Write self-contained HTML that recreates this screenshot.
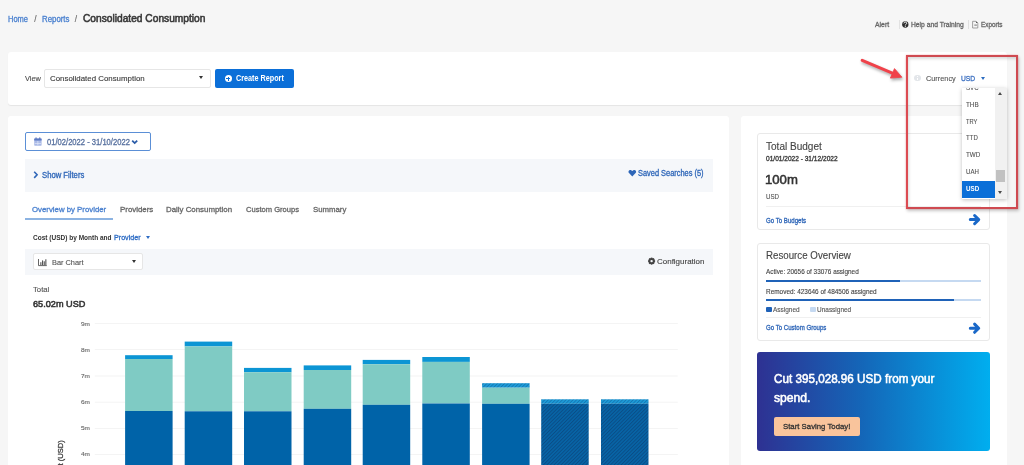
<!DOCTYPE html>
<html><head><meta charset="utf-8"><style>
*{margin:0;padding:0;box-sizing:border-box}
html,body{width:1024px;height:465px;overflow:hidden;background:#f6f6f6}
#root{position:absolute;left:0;top:0;width:1040px;height:490px;background:#f6f6f6;filter:blur(0.35px)}
body{background:#f6f6f6;font-family:'Liberation Sans',sans-serif;position:relative}
.a{position:absolute}
.tx{position:absolute;white-space:nowrap;transform-origin:0 0;font-family:'Liberation Sans',sans-serif}
.card{position:absolute;background:#fff}
.bar{position:absolute}
.txr{position:absolute;white-space:nowrap;transform-origin:0 0;font-family:'Liberation Sans',sans-serif}

</style></head><body>
<div id="root">
<!-- top card -->
<div class="card" style="left:8px;top:52px;width:998.6px;height:53px;border-radius:3px;box-shadow:0 1px 1px rgba(0,0,0,0.07)"></div>
<div class="a" style="left:44px;top:69px;width:166.5px;height:18.5px;border:1px solid #e6e6e6;border-radius:2px;background:#fff"></div>
<div class="a" style="left:198.5px;top:75.9px;width:0;height:0;border-left:2.6px solid transparent;border-right:2.6px solid transparent;border-top:3.2px solid #333"></div>
<div class="a" style="left:215px;top:69px;width:79px;height:19px;background:#0b6fd8;border-radius:2px"></div>
<div class="a" style="left:224.5px;top:75px;width:7px;height:7px;border-radius:50%;background:#fff"></div>
<div class="a" style="left:226px;top:78px;width:4px;height:1px;background:#0b6fd8"></div>
<div class="a" style="left:227.5px;top:76.5px;width:1px;height:4px;background:#0b6fd8"></div>
<!-- top right links -->
<div class="a" style="left:899px;top:20px;width:1px;height:8.5px;background:#e2e2e2"></div>
<div class="a" style="left:967.8px;top:20px;width:1px;height:8.5px;background:#e0e0e0"></div>
<svg class="a" style="left:0;top:0" width="1024" height="40">
<circle cx="905.3" cy="24.5" r="3.15" fill="#2e2e2e"/>
<path d="M903.9 23.4 q0.1 -1.3 1.4 -1.3 q1.4 0 1.4 1.2 q0 0.8 -1.1 1.3 l-0.3 0.9" stroke="#fff" stroke-width="0.9" fill="none"/>
<rect x="904.85" y="26" width="0.9" height="0.9" fill="#fff"/>
<path d="M972.6 21.3 h3.4 l1.8 1.8 v4.9 h-5.2 z" stroke="#8a8a8a" stroke-width="0.8" fill="none"/><path d="M976 21.3 l1.8 1.8 h-1.8 z" fill="#555"/>
<path d="M974.3 25.1 h2.6" stroke="#666" stroke-width="0.9"/>
</svg>
<!-- currency -->
<div class="a" style="left:914.3px;top:74.6px;width:6.4px;height:6.4px;border-radius:50%;background:#e3e6ea"></div><div class="a" style="left:917px;top:76.3px;width:1px;height:0.9px;background:#fff"></div><div class="a" style="left:917px;top:77.6px;width:1px;height:2px;background:#fff"></div>
<div class="a" style="left:980.5px;top:76.5px;width:0;height:0;border-left:2.5px solid transparent;border-right:2.5px solid transparent;border-top:3px solid #2d6cc0"></div>

<!-- left card -->
<div class="card" style="left:8px;top:116px;width:721px;height:360px;border-radius:3px"></div>
<div class="a" style="left:25px;top:132px;width:125.5px;height:18.5px;border:1px solid #5b8fd6;border-radius:2px"></div>
<div class="a" style="left:25px;top:159px;width:687.5px;height:32.5px;background:#f5f7fa"></div>
<div class="a" style="left:25px;top:218px;width:88px;height:2px;background:#8cb3e2"></div>
<div class="a" style="left:145.5px;top:236px;width:0;height:0;border-left:2.5px solid transparent;border-right:2.5px solid transparent;border-top:3px solid #2e6cc4"></div>
<div class="a" style="left:25px;top:249px;width:687.5px;height:25.5px;background:#f5f7fa"></div>
<div class="a" style="left:32.8px;top:253.4px;width:110.7px;height:16.2px;background:#fff;border:1px solid #e6e6e6;border-radius:2px"></div>
<div class="a" style="left:132px;top:260px;width:0;height:0;border-left:2.5px solid transparent;border-right:2.5px solid transparent;border-top:3px solid #333"></div>

<!-- chart + icons -->
<svg class="a" style="left:0;top:0" width="1024" height="465" viewBox="0 0 1024 465">
<defs>
<pattern id="hatch" patternUnits="userSpaceOnUse" width="2.5" height="2.5" patternTransform="rotate(45)">
<rect width="2.5" height="2.5" fill="#0764a6"/><rect width="0.9" height="2.5" fill="#0a4d86"/>
</pattern>
<pattern id="hatch2" patternUnits="userSpaceOnUse" width="2.5" height="2.5" patternTransform="rotate(45)">
<rect width="2.5" height="2.5" fill="#1c9cd8"/><rect width="0.9" height="2.5" fill="#1577b4"/>
</pattern>
</defs>
<!-- calendar icon -->
<rect x="34.2" y="138.4" width="7.4" height="7.4" rx="0.7" fill="#a9b9e6"/>
<rect x="34.2" y="138.4" width="7.4" height="2.2" rx="0.5" fill="#5b78c2"/>
<rect x="35.5" y="137.4" width="1.1" height="1.8" fill="#5b78c2"/><rect x="39.2" y="137.4" width="1.1" height="1.8" fill="#5b78c2"/>
<g fill="#e8edf9"><rect x="37.6" y="141" width="0.6" height="4.2"/><rect x="34.8" y="143.2" width="6.2" height="0.6"/></g>
<path d="M132.2 140.6 l2.5 2.5 l2.5 -2.5" stroke="#2a5ca8" stroke-width="1.8" fill="none"/>
<!-- show filters chevron -->
<path d="M34.2 171.7 l2.9 3.1 l-2.9 3.1" stroke="#2e66b8" stroke-width="1.6" fill="none"/>
<!-- heart -->
<path d="M632.3 176.4 L629 173.1 C627.8 171.9 628.6 169.9 630.3 169.9 C631.2 169.9 631.9 170.5 632.3 171.1 C632.7 170.5 633.4 169.9 634.3 169.9 C636 169.9 636.8 171.9 635.6 173.1 Z" fill="#2e66b8"/>
<!-- bar chart icon -->
<path d="M38.5 259 v6.6 h8.3" stroke="#555" stroke-width="0.9" fill="none"/>
<g fill="#555"><rect x="40.3" y="262.2" width="1.1" height="2.9"/><rect x="42" y="260.4" width="1.1" height="4.7"/><rect x="43.7" y="261.3" width="1.1" height="3.8"/><rect x="45.3" y="259.3" width="1.1" height="5.8"/></g>
<!-- gear -->
<g transform="translate(651.6 261.1)">
<circle r="2.4" fill="none" stroke="#444" stroke-width="1.5"/>
<g fill="#444"><rect x="-0.8" y="-3.5" width="1.6" height="7"/><rect x="-3.5" y="-0.8" width="7" height="1.6"/><rect x="-0.8" y="-3.5" width="1.6" height="7" transform="rotate(45)"/><rect x="-0.8" y="-3.5" width="1.6" height="7" transform="rotate(-45)"/></g>
<circle r="1.2" fill="#f5f7fa"/>
</g>
<g fill="#f4f4f4">
<rect x="94.8" y="323" width="583" height="1"/>
<rect x="94.8" y="349" width="583" height="1"/>
<rect x="94.8" y="375.5" width="583" height="1"/>
<rect x="94.8" y="401.7" width="583" height="1"/>
<rect x="94.8" y="428" width="583" height="1"/>
<rect x="94.8" y="454" width="583" height="1"/>
</g>
<rect x="125.1" y="355.2" width="47.5" height="3.8" fill="#0c95d4"/>
<rect x="125.1" y="359.0" width="47.5" height="52.0" fill="#7fcbc4"/>
<rect x="125.1" y="411.0" width="47.5" height="59.0" fill="#0063a8"/>
<rect x="184.7" y="341.6" width="47.5" height="4.8" fill="#0c95d4"/>
<rect x="184.7" y="346.4" width="47.5" height="64.9" fill="#7fcbc4"/>
<rect x="184.7" y="411.3" width="47.5" height="58.7" fill="#0063a8"/>
<rect x="244.0" y="367.9" width="47.5" height="4.3" fill="#0c95d4"/>
<rect x="244.0" y="372.2" width="47.5" height="39.1" fill="#7fcbc4"/>
<rect x="244.0" y="411.3" width="47.5" height="58.7" fill="#0063a8"/>
<rect x="303.7" y="365.4" width="47.5" height="4.6" fill="#0c95d4"/>
<rect x="303.7" y="370.0" width="47.5" height="38.8" fill="#7fcbc4"/>
<rect x="303.7" y="408.8" width="47.5" height="61.2" fill="#0063a8"/>
<rect x="362.7" y="359.9" width="47.5" height="4.3" fill="#0c95d4"/>
<rect x="362.7" y="364.2" width="47.5" height="40.6" fill="#7fcbc4"/>
<rect x="362.7" y="404.8" width="47.5" height="65.2" fill="#0063a8"/>
<rect x="422.3" y="357.0" width="47.5" height="4.9" fill="#0c95d4"/>
<rect x="422.3" y="361.9" width="47.5" height="41.6" fill="#7fcbc4"/>
<rect x="422.3" y="403.5" width="47.5" height="66.5" fill="#0063a8"/>
<rect x="482.1" y="383.2" width="47.5" height="4.5" fill="url(#hatch2)"/>
<rect x="482.1" y="387.7" width="47.5" height="16.1" fill="#7fcbc4"/>
<rect x="482.1" y="403.8" width="47.5" height="66.2" fill="#0063a8"/>
<rect x="541.2" y="399.3" width="47.5" height="4.5" fill="url(#hatch2)"/>
<rect x="541.2" y="403.8" width="47.5" height="66.2" fill="url(#hatch)"/>
<rect x="601.0" y="399.3" width="47.5" height="4.5" fill="url(#hatch2)"/>
<rect x="601.0" y="403.8" width="47.5" height="66.2" fill="url(#hatch)"/>
</svg>
<span class="txr" style="left:56.9px;top:479.4px;font-size:7.6px;line-height:7.6px;color:#444;-webkit-text-stroke:0.3px #444;transform:rotate(-90deg)">Cost (USD)</span>

<!-- right panel -->
<div class="card" style="left:741px;top:116px;width:265.6px;height:360px;border-radius:3px"></div>
<div class="a" style="left:757px;top:132.8px;width:233px;height:97.5px;border:1px solid #e9e9e9;border-radius:3px"></div>
<div class="a" style="left:766px;top:206px;width:215px;height:1px;background:#f0f0f0"></div>
<div class="a" style="left:757px;top:242.8px;width:233px;height:98.5px;border:1px solid #e9e9e9;border-radius:3px"></div>
<div class="a" style="left:766px;top:279.5px;width:215px;height:2px;background:#c5d9f1"></div>
<div class="a" style="left:766px;top:279.5px;width:134px;height:2px;background:#1f62b8"></div>
<div class="a" style="left:766px;top:298.5px;width:215px;height:2px;background:#c5d9f1"></div>
<div class="a" style="left:766px;top:298.5px;width:188px;height:2px;background:#1f62b8"></div>
<div class="a" style="left:765.8px;top:306.6px;width:5.8px;height:5.8px;border-radius:1px;background:#1f62b8"></div>
<div class="a" style="left:809.8px;top:306.6px;width:5.8px;height:5.8px;border-radius:1px;background:#c5d9f1"></div>
<div class="a" style="left:766px;top:317.3px;width:215px;height:1px;background:#f0f0f0"></div>
<div class="a" style="left:757px;top:352.3px;width:233px;height:98.7px;border-radius:3px;background:linear-gradient(90deg,#2e3192 0%,#1466b8 45%,#00aeef 100%)"></div>
<div class="a" style="left:773.8px;top:417px;width:86px;height:19px;border-radius:2px;background:#f9c49c"></div>
<svg class="a" style="left:0;top:0" width="1024" height="465">
<g stroke="#1a68c8" stroke-width="3" fill="none" stroke-linecap="round" stroke-linejoin="round">
<path d="M970.3 219.6 H978.3 M974.6 215.5 L978.7 219.6 L974.6 223.7"/>
<path d="M970.3 328.2 H978.3 M974.6 324.1 L978.7 328.2 L974.6 332.3"/>
</g>
</svg>

<!-- dropdown list -->
<div class="a" style="left:961.5px;top:87.5px;width:45.5px;height:111px;background:#fff;box-shadow:0 1px 4px rgba(0,0,0,0.25)"></div>
<div class="a" style="left:995.3px;top:87.5px;width:11.7px;height:111px;background:#f1f1f1"></div>
<div class="a" style="left:996.3px;top:170.3px;width:8.7px;height:11.5px;background:#c1c1c1"></div>
<div class="a" style="left:961.5px;top:181px;width:33.5px;height:17.3px;background:#0b6fd8"></div>
<div class="a" style="left:998px;top:91.8px;width:0;height:0;border-left:2.8px solid transparent;border-right:2.8px solid transparent;border-bottom:3.2px solid #4a4a4a"></div>
<div class="a" style="left:998px;top:190.6px;width:0;height:0;border-left:2.8px solid transparent;border-right:2.8px solid transparent;border-top:3.2px solid #4a4a4a"></div>

<span class="tx" style="left:8.0px;top:15.00px;font-size:8.4px;line-height:8.4px;font-weight:400;color:#4a80cf;-webkit-text-stroke:0.3px currentColor;transform:scaleX(0.8950);">Home</span>
<span class="tx" style="left:34.2px;top:15.00px;font-size:8.4px;line-height:8.4px;font-weight:400;color:#666;-webkit-text-stroke:0.12px currentColor;">/</span>
<span class="tx" style="left:41.8px;top:15.00px;font-size:8.4px;line-height:8.4px;font-weight:400;color:#4a80cf;-webkit-text-stroke:0.3px currentColor;transform:scaleX(0.9369);">Reports</span>
<span class="tx" style="left:74.7px;top:15.00px;font-size:8.4px;line-height:8.4px;font-weight:400;color:#666;-webkit-text-stroke:0.12px currentColor;">/</span>
<span class="tx" style="left:82.7px;top:14.00px;font-size:10.1px;line-height:10.1px;font-weight:400;color:#383838;-webkit-text-stroke:0.55px currentColor;transform:scaleX(1.0101);">Consolidated Consumption</span>
<span class="tx" style="left:874.5px;top:22.00px;font-size:6.9px;line-height:6.9px;font-weight:400;color:#666;-webkit-text-stroke:0.3px currentColor;transform:scaleX(0.9962);">Alert</span>
<span class="tx" style="left:911.0px;top:22.00px;font-size:6.9px;line-height:6.9px;font-weight:400;color:#666;-webkit-text-stroke:0.3px currentColor;transform:scaleX(0.9760);">Help and Training</span>
<span class="tx" style="left:981.0px;top:22.00px;font-size:6.9px;line-height:6.9px;font-weight:400;color:#666;-webkit-text-stroke:0.3px currentColor;transform:scaleX(0.9199);">Exports</span>
<span class="tx" style="left:24.7px;top:75.00px;font-size:8px;line-height:8px;font-weight:400;color:#4a4a4a;-webkit-text-stroke:0.12px currentColor;transform:scaleX(0.9243);">View</span>
<span class="tx" style="left:49.8px;top:75.00px;font-size:8px;line-height:8px;font-weight:400;color:#3a3a3a;-webkit-text-stroke:0.12px currentColor;transform:scaleX(0.9853);">Consolidated Consumption</span>
<span class="tx" style="left:236.0px;top:74.00px;font-size:8.4px;line-height:8.4px;font-weight:700;color:#fff;transform:scaleX(0.8634);">Create Report</span>
<span class="tx" style="left:926.0px;top:75.00px;font-size:8px;line-height:8px;font-weight:400;color:#555;-webkit-text-stroke:0.12px currentColor;transform:scaleX(0.9152);">Currency</span>
<span class="tx" style="left:961.0px;top:75.00px;font-size:8px;line-height:8px;font-weight:400;color:#3b6fc0;-webkit-text-stroke:0.3px currentColor;transform:scaleX(0.8415);">USD</span>
<span class="tx" style="left:966.2px;top:84.00px;font-size:7.0px;line-height:7.0px;font-weight:400;color:#555;-webkit-text-stroke:0.12px currentColor;transform:scaleX(0.8788);clip-path:inset(3.9px 0 0 0);">SVC</span>
<span class="tx" style="left:966.2px;top:101.00px;font-size:7.0px;line-height:7.0px;font-weight:400;color:#555;-webkit-text-stroke:0.12px currentColor;transform:scaleX(0.9001);">THB</span>
<span class="tx" style="left:966.2px;top:118.00px;font-size:7.0px;line-height:7.0px;font-weight:400;color:#555;-webkit-text-stroke:0.12px currentColor;transform:scaleX(0.8166);">TRY</span>
<span class="tx" style="left:966.2px;top:134.00px;font-size:7.0px;line-height:7.0px;font-weight:400;color:#555;-webkit-text-stroke:0.12px currentColor;transform:scaleX(0.8634);">TTD</span>
<span class="tx" style="left:966.2px;top:151.00px;font-size:7.0px;line-height:7.0px;font-weight:400;color:#555;-webkit-text-stroke:0.12px currentColor;transform:scaleX(0.8940);">TWD</span>
<span class="tx" style="left:966.2px;top:168.00px;font-size:7.0px;line-height:7.0px;font-weight:400;color:#555;-webkit-text-stroke:0.12px currentColor;transform:scaleX(0.8693);">UAH</span>
<span class="tx" style="left:966.2px;top:185.00px;font-size:7.0px;line-height:7.0px;font-weight:700;color:#fff;transform:scaleX(0.8897);">USD</span>
<span class="tx" style="left:46.7px;top:139.00px;font-size:8.2px;line-height:8.2px;font-weight:400;color:#58719f;-webkit-text-stroke:0.3px currentColor;transform:scaleX(0.9289);">01/02/2022 - 31/10/2022</span>
<span class="tx" style="left:41.6px;top:172.00px;font-size:8.2px;line-height:8.2px;font-weight:400;color:#2e66b8;-webkit-text-stroke:0.3px currentColor;transform:scaleX(0.9388);">Show Filters</span>
<span class="tx" style="left:638.2px;top:170.00px;font-size:8.2px;line-height:8.2px;font-weight:400;color:#2e66b8;-webkit-text-stroke:0.3px currentColor;transform:scaleX(0.9059);">Saved Searches (5)</span>
<span class="tx" style="left:31.5px;top:206.00px;font-size:8px;line-height:8px;font-weight:400;color:#4a80cf;-webkit-text-stroke:0.3px currentColor;transform:scaleX(0.9756);">Overview by Provider</span>
<span class="tx" style="left:119.5px;top:206.00px;font-size:8px;line-height:8px;font-weight:400;color:#666;-webkit-text-stroke:0.3px currentColor;transform:scaleX(0.9855);">Providers</span>
<span class="tx" style="left:166.4px;top:206.00px;font-size:8px;line-height:8px;font-weight:400;color:#666;-webkit-text-stroke:0.3px currentColor;transform:scaleX(0.9836);">Daily Consumption</span>
<span class="tx" style="left:246.0px;top:206.00px;font-size:8px;line-height:8px;font-weight:400;color:#666;-webkit-text-stroke:0.3px currentColor;transform:scaleX(0.9461);">Custom Groups</span>
<span class="tx" style="left:312.6px;top:206.00px;font-size:8px;line-height:8px;font-weight:400;color:#666;-webkit-text-stroke:0.3px currentColor;transform:scaleX(0.9729);">Summary</span>
<span class="tx" style="left:32.8px;top:234.00px;font-size:7.4px;line-height:7.4px;font-weight:700;color:#333;transform:scaleX(0.8820);">Cost (USD) by Month and</span>
<span class="tx" style="left:113.7px;top:234.00px;font-size:7.4px;line-height:7.4px;font-weight:400;color:#2e6cc4;-webkit-text-stroke:0.3px currentColor;transform:scaleX(0.9658);">Provider</span>
<span class="tx" style="left:52.0px;top:259.00px;font-size:8px;line-height:8px;font-weight:400;color:#555;-webkit-text-stroke:0.12px currentColor;transform:scaleX(0.9225);">Bar Chart</span>
<span class="tx" style="left:656.8px;top:258.00px;font-size:7.6px;line-height:7.6px;font-weight:400;color:#444;-webkit-text-stroke:0.12px currentColor;transform:scaleX(1.0501);">Configuration</span>
<span class="tx" style="left:33.3px;top:286.00px;font-size:7.4px;line-height:7.4px;font-weight:400;color:#555;-webkit-text-stroke:0.12px currentColor;transform:scaleX(1.0458);">Total</span>
<span class="tx" style="left:33.3px;top:299.00px;font-size:9.6px;line-height:9.6px;font-weight:400;color:#333;-webkit-text-stroke:0.55px currentColor;transform:scaleX(0.9529);">65.02m USD</span>
<span class="tx" style="left:80.8px;top:321.00px;font-size:6.2px;line-height:6.2px;font-weight:400;color:#666;-webkit-text-stroke:0.12px currentColor;transform:scaleX(1.0425);">9m</span>
<span class="tx" style="left:80.8px;top:347.00px;font-size:6.2px;line-height:6.2px;font-weight:400;color:#666;-webkit-text-stroke:0.12px currentColor;transform:scaleX(1.0425);">8m</span>
<span class="tx" style="left:80.8px;top:373.00px;font-size:6.2px;line-height:6.2px;font-weight:400;color:#666;-webkit-text-stroke:0.12px currentColor;transform:scaleX(1.0425);">7m</span>
<span class="tx" style="left:80.8px;top:399.00px;font-size:6.2px;line-height:6.2px;font-weight:400;color:#666;-webkit-text-stroke:0.12px currentColor;transform:scaleX(1.0425);">6m</span>
<span class="tx" style="left:80.8px;top:425.00px;font-size:6.2px;line-height:6.2px;font-weight:400;color:#666;-webkit-text-stroke:0.12px currentColor;transform:scaleX(1.0425);">5m</span>
<span class="tx" style="left:80.8px;top:451.00px;font-size:6.2px;line-height:6.2px;font-weight:400;color:#666;-webkit-text-stroke:0.12px currentColor;transform:scaleX(1.0425);">4m</span>
<span class="tx" style="left:766.3px;top:142.00px;font-size:10.4px;line-height:10.4px;font-weight:400;color:#444;-webkit-text-stroke:0.12px currentColor;transform:scaleX(0.9658);">Total Budget</span>
<span class="tx" style="left:766.3px;top:155.00px;font-size:7px;line-height:7px;font-weight:400;color:#333;-webkit-text-stroke:0.3px currentColor;transform:scaleX(0.9385);">01/01/2022 - 31/12/2022</span>
<span class="tx" style="left:765.32px;top:173.00px;font-size:13.4px;line-height:13.4px;font-weight:400;color:#333;-webkit-text-stroke:0.55px currentColor;transform:scaleX(0.9802);">100m</span>
<span class="tx" style="left:766.3px;top:193.00px;font-size:7.6px;line-height:7.6px;font-weight:400;color:#555;-webkit-text-stroke:0.12px currentColor;transform:scaleX(0.8097);">USD</span>
<span class="tx" style="left:766.3px;top:217.00px;font-size:7px;line-height:7px;font-weight:400;color:#2e66b8;-webkit-text-stroke:0.3px currentColor;transform:scaleX(0.8695);">Go To Budgets</span>
<span class="tx" style="left:766.0px;top:251.00px;font-size:10.4px;line-height:10.4px;font-weight:400;color:#444;-webkit-text-stroke:0.12px currentColor;transform:scaleX(0.9358);">Resource Overview</span>
<span class="tx" style="left:766.0px;top:268.00px;font-size:7px;line-height:7px;font-weight:400;color:#444;-webkit-text-stroke:0.12px currentColor;transform:scaleX(0.9126);">Active: 20656 of 33076 assigned</span>
<span class="tx" style="left:766.0px;top:288.00px;font-size:7px;line-height:7px;font-weight:400;color:#444;-webkit-text-stroke:0.12px currentColor;transform:scaleX(0.9205);">Removed: 423646 of 484506 assigned</span>
<span class="tx" style="left:773.0px;top:306.00px;font-size:7px;line-height:7px;font-weight:400;color:#555;-webkit-text-stroke:0.12px currentColor;transform:scaleX(0.9238);">Assigned</span>
<span class="tx" style="left:817.4px;top:306.00px;font-size:7px;line-height:7px;font-weight:400;color:#555;-webkit-text-stroke:0.12px currentColor;transform:scaleX(0.9251);">Unassigned</span>
<span class="tx" style="left:766.0px;top:324.00px;font-size:7px;line-height:7px;font-weight:400;color:#2e66b8;-webkit-text-stroke:0.3px currentColor;transform:scaleX(0.8683);">Go To Custom Groups</span>
<span class="tx" style="left:773.8px;top:373.00px;font-size:12.4px;line-height:12.4px;font-weight:400;color:#fff;-webkit-text-stroke:0.55px currentColor;transform:scaleX(0.9424);">Cut 395,028.96 USD from your</span>
<span class="tx" style="left:773.8px;top:392.00px;font-size:12.4px;line-height:12.4px;font-weight:400;color:#fff;-webkit-text-stroke:0.55px currentColor;transform:scaleX(0.9793);">spend.</span>
<span class="tx" style="left:783.0px;top:423.00px;font-size:7.8px;line-height:7.8px;font-weight:400;color:#333;-webkit-text-stroke:0.3px currentColor;transform:scaleX(0.9994);">Start Saving Today!</span>
<!-- annotation -->
<div class="a" style="left:906px;top:55px;width:111.5px;height:154px;border:2.5px solid #cf4a51;border-left-color:#dc4b52;box-shadow:1px 2px 3px rgba(0,0,0,0.22), inset 1px 2px 3px rgba(0,0,0,0.14), 0 0 1.5px rgba(255,90,100,0.5);filter:blur(0.35px)"></div>
<svg class="a" style="left:0;top:0;filter:drop-shadow(1px 2px 1.5px rgba(0,0,0,0.35))" width="1024" height="120">
<path d="M862.2 60.3 L893.5 73.7" stroke="#f0424a" stroke-width="3.1" stroke-linecap="round"/>
<path d="M901.9 77.2 L894.5 68.6 L890.4 78.1 Z" fill="#f0424a" stroke="#f0424a" stroke-width="0.8" stroke-linejoin="round"/>
</svg>

</div>
</body></html>
